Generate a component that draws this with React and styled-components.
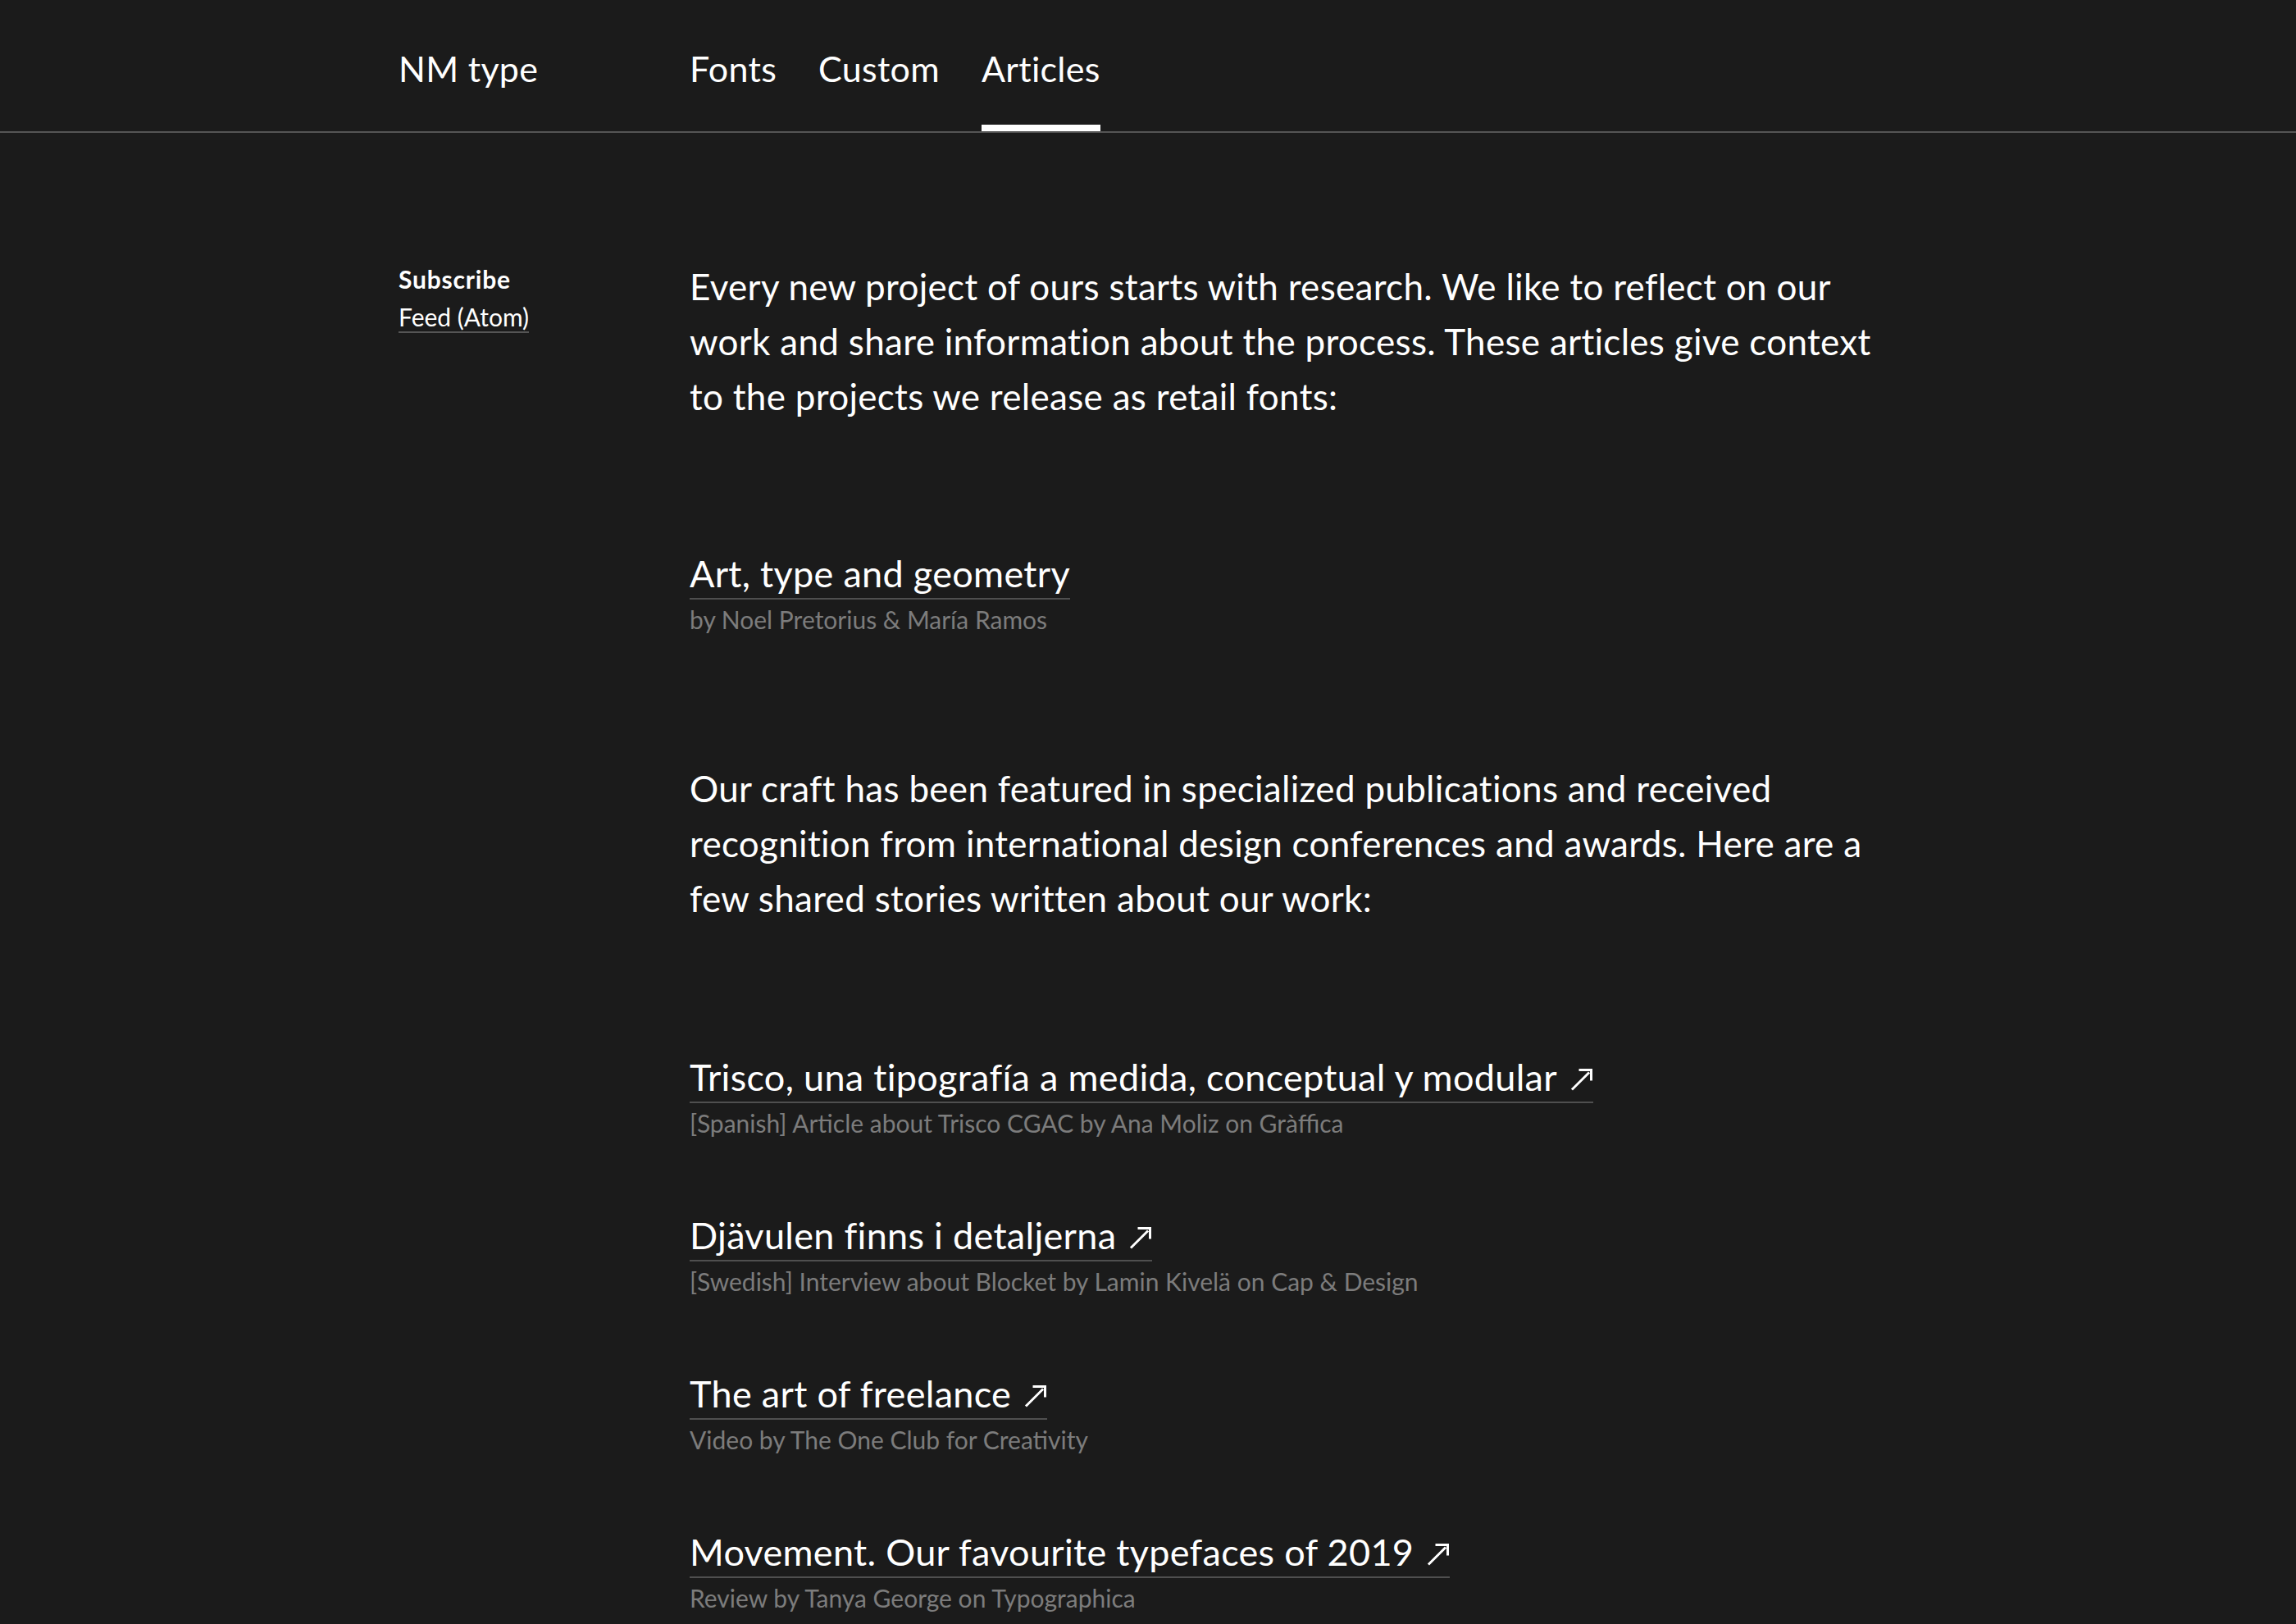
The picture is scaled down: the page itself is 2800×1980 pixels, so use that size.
import React from "react";
import styled, { createGlobalStyle } from "styled-components";

const Global = createGlobalStyle`
  html, body { margin: 0; padding: 0; background: #1b1b1b; }
  body {
    font-family: Lato, "Noto Sans", "Liberation Sans", sans-serif;
    color: #ffffff;
    -webkit-font-smoothing: antialiased;
  }
  a { color: inherit; text-decoration: none; }
`;

const Page = styled.div`
  min-height: 1980px;
  background: #1b1b1b;
`;

const Header = styled.header`
  height: 160px;
  border-bottom: 2px solid #555555;
  display: grid;
  grid-template-columns: 355px auto;
  padding-left: 486px;
  align-items: stretch;
`;

const Logo = styled.a`
  font-size: 43px;
  letter-spacing: 0.3px;
  line-height: 43px;
  align-self: start;
  padding-top: 62px;
`;

const Nav = styled.nav`
  display: flex;
  gap: 51px;
  height: 100%;
`;

const NavItem = styled.a`
  position: relative;
  font-size: 43px;
  letter-spacing: 0.3px;
  line-height: 43px;
  padding-top: 62px;
  &::after {
    content: "";
    position: absolute;
    left: 0;
    right: 0;
    bottom: 0;
    height: 8px;
    background: ${(p) => (p.$active ? "#ffffff" : "transparent")};
  }
`;

const Main = styled.main`
  display: grid;
  grid-template-columns: 355px 1490px;
  padding-left: 486px;
  padding-top: 154px;
`;

const Side = styled.aside`
  display: flex;
  flex-direction: column;
  align-items: flex-start;
  padding-top: 4px;
`;

const SideTitle = styled.div`
  font-size: 30px;
  font-weight: 700;
  letter-spacing: 0.8px;
  line-height: 40px;
`;

const SideLink = styled.a`
  margin-top: 9px;
  font-size: 30px;
  line-height: 34px;
  padding-bottom: 1px;
  border-bottom: 2px solid #555555;
`;

const Content = styled.div`
  display: flex;
  flex-direction: column;
`;

const Intro = styled.p`
  margin: 0 0 ${(p) => p.$after}px;
  font-size: 44px;
  letter-spacing: 0.3px;
  line-height: 67px;
`;

const List = styled.div`
  display: flex;
  flex-direction: column;
  gap: ${(p) => p.$gap}px;
  margin-bottom: ${(p) => p.$after}px;
`;

const Item = styled.div`
  display: flex;
  flex-direction: column;
  align-items: flex-start;
`;

const Title = styled.a`
  display: inline-flex;
  align-items: baseline;
  gap: 16px;
  font-size: 45px;
  letter-spacing: 0.3px;
  line-height: 52px;
  padding-bottom: 4px;
  border-bottom: 2px solid #4f4f4f;
`;

const Byline = styled.div`
  font-size: 30px;
  line-height: 38px;
  margin-top: 5px;
  color: #7c7c7c;
`;

const ArrowSvg = styled.svg`
  width: 28px;
  height: 28px;
  flex: none;
`;

const Arrow = () => (
  <ArrowSvg viewBox="0 0 28 28" fill="none" stroke="#fff" strokeWidth="3" strokeLinecap="square">
    <path d="M3 25.5 L22 6.5" />
    <path d="M12 2.5 L25.5 2.5 L25.5 14" />
  </ArrowSvg>
);

const ownArticles = [
  { title: "Art, type and geometry", by: "by Noel Pretorius & María Ramos" },
];

const press = [
  {
    title: "Trisco, una tipografía a medida, conceptual y modular",
    by: "[Spanish] Article about Trisco CGAC by Ana Moliz on Gràffica",
  },
  {
    title: "Djävulen finns i detaljerna",
    by: "[Swedish] Interview about Blocket by Lamin Kivelä on Cap & Design",
  },
  { title: "The art of freelance", by: "Video by The One Club for Creativity" },
  {
    title: "Movement. Our favourite typefaces of 2019",
    by: "Review by Tanya George on Typographica",
  },
];

export default function App() {
  return (
    <Page>
      <Global />
      <Header>
        <Logo href="#">NM type</Logo>
        <Nav>
          <NavItem href="#">Fonts</NavItem>
          <NavItem href="#">Custom</NavItem>
          <NavItem href="#" $active>
            Articles
          </NavItem>
        </Nav>
      </Header>
      <Main>
        <Side>
          <SideTitle>Subscribe</SideTitle>
          <SideLink href="#">Feed (Atom)</SideLink>
        </Side>
        <Content>
          <Intro $after={156}>
            Every new project of ours starts with research. We like to reflect on our work and
            share information about the process. These articles give context to the projects we
            release as retail fonts:
          </Intro>
          <List $gap={0} $after={154}>
            {ownArticles.map((a) => (
              <Item key={a.title}>
                <Title href="#">{a.title}</Title>
                <Byline>{a.by}</Byline>
              </Item>
            ))}
          </List>
          <Intro $after={158}>
            Our craft has been featured in specialized publications and received recognition from
            international design conferences and awards. Here are a few shared stories written
            about our work:
          </Intro>
          <List $gap={92} $after={80}>
            {press.map((a) => (
              <Item key={a.title}>
                <Title href="#">
                  <span>{a.title}</span>
                  <Arrow />
                </Title>
                <Byline>{a.by}</Byline>
              </Item>
            ))}
          </List>
        </Content>
      </Main>
    </Page>
  );
}
